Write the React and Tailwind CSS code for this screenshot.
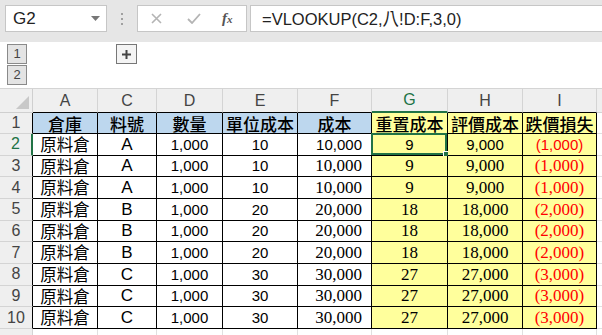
import React from 'react'

const cols = ['A', 'C', 'D', 'E', 'F', 'G', 'H', 'I']
const heads = ['倉庫', '料號', '數量', '單位成本', '成本', '重置成本', '評價成本', '跌價損失']

const rows = [
    ['原料倉', 'A', '1,000', '10', '10,000', '9', '9,000', '(1,000)'],
    ['原料倉', 'A', '1,000', '10', '10,000', '9', '9,000', '(1,000)'],
    ['原料倉', 'A', '1,000', '10', '10,000', '9', '9,000', '(1,000)'],
    ['原料倉', 'B', '1,000', '20', '20,000', '18', '18,000', '(2,000)'],
    ['原料倉', 'B', '1,000', '20', '20,000', '18', '18,000', '(2,000)'],
    ['原料倉', 'B', '1,000', '20', '20,000', '18', '18,000', '(2,000)'],
    ['原料倉', 'C', '1,000', '30', '30,000', '27', '27,000', '(3,000)'],
    ['原料倉', 'C', '1,000', '30', '30,000', '27', '27,000', '(3,000)'],
    ['原料倉', 'C', '1,000', '30', '30,000', '27', '27,000', '(3,000)'],
]

const cjk = "font-['Noto_Sans_CJK_TC',sans-serif]"
const sans = "font-['Liberation_Sans',Arial,sans-serif]"
const serif = "font-['Liberation_Serif','Times_New_Roman',serif]"

function Toolbar() {
    return (
        <div className="h-[42px] bg-[#e6e6e6] flex items-start pt-[5px] pl-[5px]">
            <div className="w-[102px] h-[27px] bg-white border border-[#c6c6c6] flex items-center justify-between pl-[7px] pr-[6px]">
                <span className={`${sans} text-[17px] text-[#222]`}>G2</span>
                <svg width="9" height="5" viewBox="0 0 9 5"><path d="M0 0h9L4.5 5z" fill="#777" /></svg>
            </div>
            <div className="w-[30px] h-[27px] flex flex-col items-center justify-center gap-[3px]">
                <span className="w-[2px] h-[2px] bg-[#a0a0a0]" />
                <span className="w-[2px] h-[2px] bg-[#a0a0a0]" />
                <span className="w-[2px] h-[2px] bg-[#a0a0a0]" />
            </div>
            <div className="w-[110px] h-[27px] bg-white border border-[#c6c6c6] flex items-center pl-[13px]">
                <svg width="11" height="11" viewBox="0 0 11 11"><path d="M1 1l9 9M10 1l-9 9" stroke="#b4b4b4" strokeWidth="1.6" /></svg>
                <svg className="ml-[25px]" width="14" height="11" viewBox="0 0 14 11"><path d="M1 6l4 4 8-9" stroke="#b4b4b4" strokeWidth="1.8" fill="none" /></svg>
                <span className={`${serif} ml-[21px] italic font-bold text-[15px] text-[#555]`}>f<span className="text-[11px]">x</span></span>
            </div>
            <div className="ml-[3px] flex-1 h-[27px] bg-white border border-[#c6c6c6] border-r-0 flex items-center pl-[11px]">
                <span className={`${sans} text-[16.5px] text-[#222]`}>=VLOOKUP(C2,<span className={cjk}>八</span>!D:F,3,0)</span>
            </div>
        </div>
    )
}

function Outline() {
    const btn = `${sans} w-[20px] h-[20px] border border-[#8a8a8a] bg-[#e4e4e4] text-[13px] text-[#444] flex items-center justify-center`
    return (
        <div className="h-[46px] bg-white flex pl-[7px] pt-[2px]">
            <div className="flex flex-col gap-[1px]">
                <div className={btn}>1</div>
                <div className={btn}>2</div>
            </div>
            <div className="ml-[89px] w-[21px] h-[20px] border border-[#777] bg-[#f4f4f4] flex items-center justify-center">
                <svg width="9" height="9" viewBox="0 0 9 9"><path d="M4.5 0v9M0 4.5h9" stroke="#444" strokeWidth="2" /></svg>
            </div>
        </div>
    )
}

function Cell({ c, r, v }) {
    const yellow = c >= 5
    let align = 'justify-center'
    if (c === 4) align = 'justify-end pr-[9px]'
    let font = `${sans} text-[15px]`
    if (c === 0) font = `${cjk} text-[16.5px]`
    if (c === 1) font = `${sans} text-[17px]`
    if (c >= 4 && r > 0) font = `${serif} text-[17px]`
    const color = c === 7 ? 'text-[#ff0000]' : 'text-black'
    return (
        <div className={`relative flex items-center ${align} ${font} ${color} ${yellow ? 'bg-[#ffff9c]' : 'bg-white'} border-r border-b border-black leading-none`}>
            {v}
            {c === 5 && r === 0 && (
                <div className="absolute -left-[1px] -top-[1px] right-0 bottom-0 border-2 border-[#217346]">
                    <div className="absolute -right-[4px] -bottom-[4px] w-[6px] h-[6px] bg-[#217346] border border-white" />
                </div>
            )}
        </div>
    )
}

function Sheet() {
    const hdr = `${sans} text-[16px] text-[#444] bg-[#efefef] flex items-center justify-center`
    return (
        <div className="grid grid-cols-[33px_65px_59px_66px_75px_74px_76px_75px_74px_1fr] grid-rows-[24px_21px_repeat(9,21.67px)_1fr] h-[247px] border-t border-[#d4d4d4]">
            <div className="bg-[#efefef] border-r border-b border-[#cfcfcf] relative">
                <svg className="absolute right-[3px] bottom-[3px]" width="13" height="13" viewBox="0 0 13 13"><path d="M13 0v13H0z" fill="#c8c8c8" /></svg>
            </div>
            {cols.map((k, i) => (
                <div key={k} className={`${hdr} ${i === 5 ? 'bg-[#d2d2d2] text-[#217346] border-b-2 border-b-[#217346]' : 'border-b border-b-black'} border-r border-r-[#d4d4d4]`}>{k}</div>
            ))}
            <div className={`${hdr} border-b border-[#d4d4d4]`} />

            <div className={`${hdr} border-r border-r-black border-b border-b-[#d4d4d4]`}>1</div>
            {heads.map((h, i) => (
                <div key={h} className={`${cjk} font-medium text-[17px] text-black flex items-center justify-center border-r border-b border-black leading-none ${i >= 5 ? 'bg-[#ffff9c]' : 'bg-[#bdd7ee]'}`}>{h}</div>
            ))}
            <div className="border-b border-[#e0e0e0] bg-white" />

            {rows.map((row, r) => (
                <React.Fragment key={r}>
                    <div className={`${hdr} border-b border-b-[#d4d4d4] ${r === 0 ? 'bg-[#d2d2d2] text-[#217346] border-r-2 border-r-[#217346]' : 'border-r border-r-black'}`}>{r + 2}</div>
                    {row.map((v, c) => <Cell key={c} c={c} r={r} v={v} />)}
                    <div className="border-b border-[#e0e0e0] bg-white" />
                </React.Fragment>
            ))}

            <div className="bg-[#efefef] border-r border-[#d4d4d4]" />
            {cols.map(k => <div key={k} className="bg-white border-r border-[#e0e0e0]" />)}
            <div className="bg-white" />
        </div>
    )
}

export default function App() {
    return (
        <div className="w-[602px] h-[335px] overflow-hidden bg-white">
            <Toolbar />
            <Outline />
            <Sheet />
        </div>
    )
}
